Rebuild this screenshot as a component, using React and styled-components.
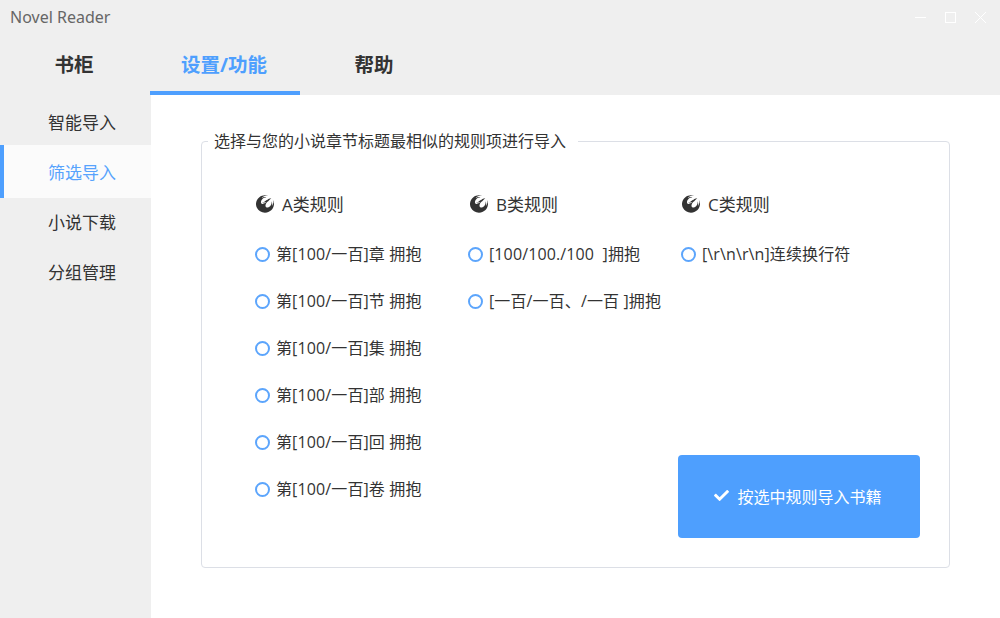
import React from "react";
import styled, { createGlobalStyle } from "styled-components";
import { FaPhoenixSquadron, FaCheck } from "react-icons/fa";

const Global = createGlobalStyle`
  html, body { margin: 0; padding: 0; height: 100%; }
  body { font-family: "Open Sans", "Noto Sans CJK SC", sans-serif; background: #efefef; color: #333; }
`;
const Page = styled.div`
  width: 1000px;
  height: 618px;
  display: flex;
  flex-direction: column;
  overflow: hidden;
  background: #efefef;
`;
const TitleBar = styled.div`
  height: 35px;
  display: flex;
  align-items: center;
  justify-content: space-between;
  padding: 0 14px 0 10px;
  flex-shrink: 0;
`;
const AppName = styled.span`
  font-family: "Noto Sans", sans-serif;
  font-size: 16px;
  color: #666;
  position: relative;
  top: -1px;
`;
const WinButtons = styled.div`
  display: flex;
  gap: 19px;
  align-items: center;
`;
const WinIcon = styled.svg`
  width: 11px;
  height: 11px;
  fill: none;
  stroke: #fff;
  stroke-width: 1;
  display: block;
`;
const Tabs = styled.div`
  height: 60px;
  display: flex;
  flex-shrink: 0;
`;
const Tab = styled.div`
  width: 150px;
  box-sizing: border-box;
  display: flex;
  align-items: center;
  justify-content: center;
  font-size: 19.5px;
  font-weight: 700;
  padding-top: 1px;
  padding-right: 2px;
  color: ${(p) => (p.$active ? "#4e9ffe" : "#333")};
  border-bottom: 4px solid ${(p) => (p.$active ? "#4e9ffe" : "transparent")};
`;
const Body = styled.div`
  flex: 1;
  display: flex;
  min-height: 0;
`;
const Sidebar = styled.div`
  width: 151px;
  flex-shrink: 0;
  padding-top: 2px;
`;
const NavItem = styled.div`
  height: ${(p) => (p.$active ? "53px" : "50px")};
  margin: ${(p) => (p.$active ? "-2px 0 -1px" : "0")};
  box-sizing: border-box;
  display: flex;
  align-items: center;
  justify-content: center;
  font-size: 17px;
  color: ${(p) => (p.$active ? "#57a3fd" : "#333")};
  background: ${(p) => (p.$active ? "#fbfbfb" : "transparent")};
  border-left: ${(p) => (p.$active ? "4px solid #4e9ffe" : "none")};
  padding-left: ${(p) => (p.$active ? "9px" : "13px")};
  padding-bottom: ${(p) => (p.$active ? "0" : "2px")};
`;
const Content = styled.div`
  flex: 1;
  background: #fff;
  padding: 35px 50px 50px;
  box-sizing: border-box;
  display: flex;
`;
const Rules = styled.fieldset`
  flex: 1;
  margin: 0;
  min-width: 0;
  border: 1px solid #dcdfe6;
  border-radius: 4px;
  padding: 36px 29px 29px 53px;
  box-sizing: border-box;
  display: grid;
  grid-template-columns: 213px 210px 242px;
`;
const Legend = styled.legend`
  font-size: 16px;
  line-height: 22px;
  color: #333;
  padding: 0 12px 0 6px;
  margin-left: -47px;
`;
const Column = styled.div`
  display: flex;
  flex-direction: column;
  min-width: 0;
`;
const Heading = styled.div`
  height: 30px;
  display: flex;
  align-items: center;
  font-size: 17px;
  color: #333;
  padding-left: ${(p) => p.$pad}px;
  margin-bottom: 21px;
`;
const Bird = styled(FaPhoenixSquadron)`
  width: 18px;
  height: 18px;
  color: #333;
  margin: 2px 8px 0 0;
`;
const Rule = styled.label`
  height: 47px;
  display: flex;
  align-items: flex-start;
  font-size: 16px;
  letter-spacing: 0.12px;
  line-height: 30px;
  color: #333;
  white-space: pre;
  padding-left: ${(p) => p.$inset}px;
`;
const Dot = styled.span`
  width: 15px;
  height: 15px;
  box-sizing: border-box;
  border: 2px solid #5ca5fc;
  border-radius: 50%;
  margin: 8px 6px 0 0;
  flex-shrink: 0;
`;
const ImportButton = styled.button`
  margin-top: auto;
  height: 83px;
  width: 242px;
  border: none;
  border-radius: 4px;
  background: #4e9ffe;
  color: #fff;
  font: inherit;
  font-size: 16px;
  display: flex;
  align-items: center;
  justify-content: center;
  gap: 8px;
  padding: 0 2px 2px 0;
`;

const groups = [
  {
    name: "A类规则",
    pad: 1,
    inset: 0,
    rules: [
      "第[100/一百]章 拥抱",
      "第[100/一百]节 拥抱",
      "第[100/一百]集 拥抱",
      "第[100/一百]部 拥抱",
      "第[100/一百]回 拥抱",
      "第[100/一百]卷 拥抱",
    ],
  },
  { name: "B类规则", pad: 2, inset: 0, rules: ["[100/100./100  ]拥抱", "[一百/一百、/一百 ]拥抱"] },
  { name: "C类规则", pad: 4, inset: 3, rules: ["[\\r\\n\\r\\n]连续换行符"] },
];

export default function App() {
  return (
    <Page>
      <Global />
      <TitleBar>
        <AppName>Novel Reader</AppName>
        <WinButtons>
          <WinIcon viewBox="0 0 11 11"><path d="M0 5.5h12" /></WinIcon>
          <WinIcon viewBox="0 0 11 11"><rect x="0.5" y="0.5" width="10" height="10" /></WinIcon>
          <WinIcon viewBox="0 0 11 11"><path d="M0 0l11 11M11 0L0 11" /></WinIcon>
        </WinButtons>
      </TitleBar>
      <Tabs>
        <Tab>书柜</Tab>
        <Tab $active>设置/功能</Tab>
        <Tab>帮助</Tab>
      </Tabs>
      <Body>
        <Sidebar>
          <NavItem>智能导入</NavItem>
          <NavItem $active>筛选导入</NavItem>
          <NavItem>小说下载</NavItem>
          <NavItem>分组管理</NavItem>
        </Sidebar>
        <Content>
          <Rules>
            <Legend>选择与您的小说章节标题最相似的规则项进行导入</Legend>
            {groups.map((g) => (
              <Column key={g.name}>
                <Heading $pad={g.pad}><Bird />{g.name}</Heading>
                {g.rules.map((r) => (
                  <Rule key={r} $inset={g.inset}><Dot />{r}</Rule>
                ))}
                {g.inset > 0 && (
                  <ImportButton><FaCheck size={15} />按选中规则导入书籍</ImportButton>
                )}
              </Column>
            ))}
          </Rules>
        </Content>
      </Body>
    </Page>
  );
}
